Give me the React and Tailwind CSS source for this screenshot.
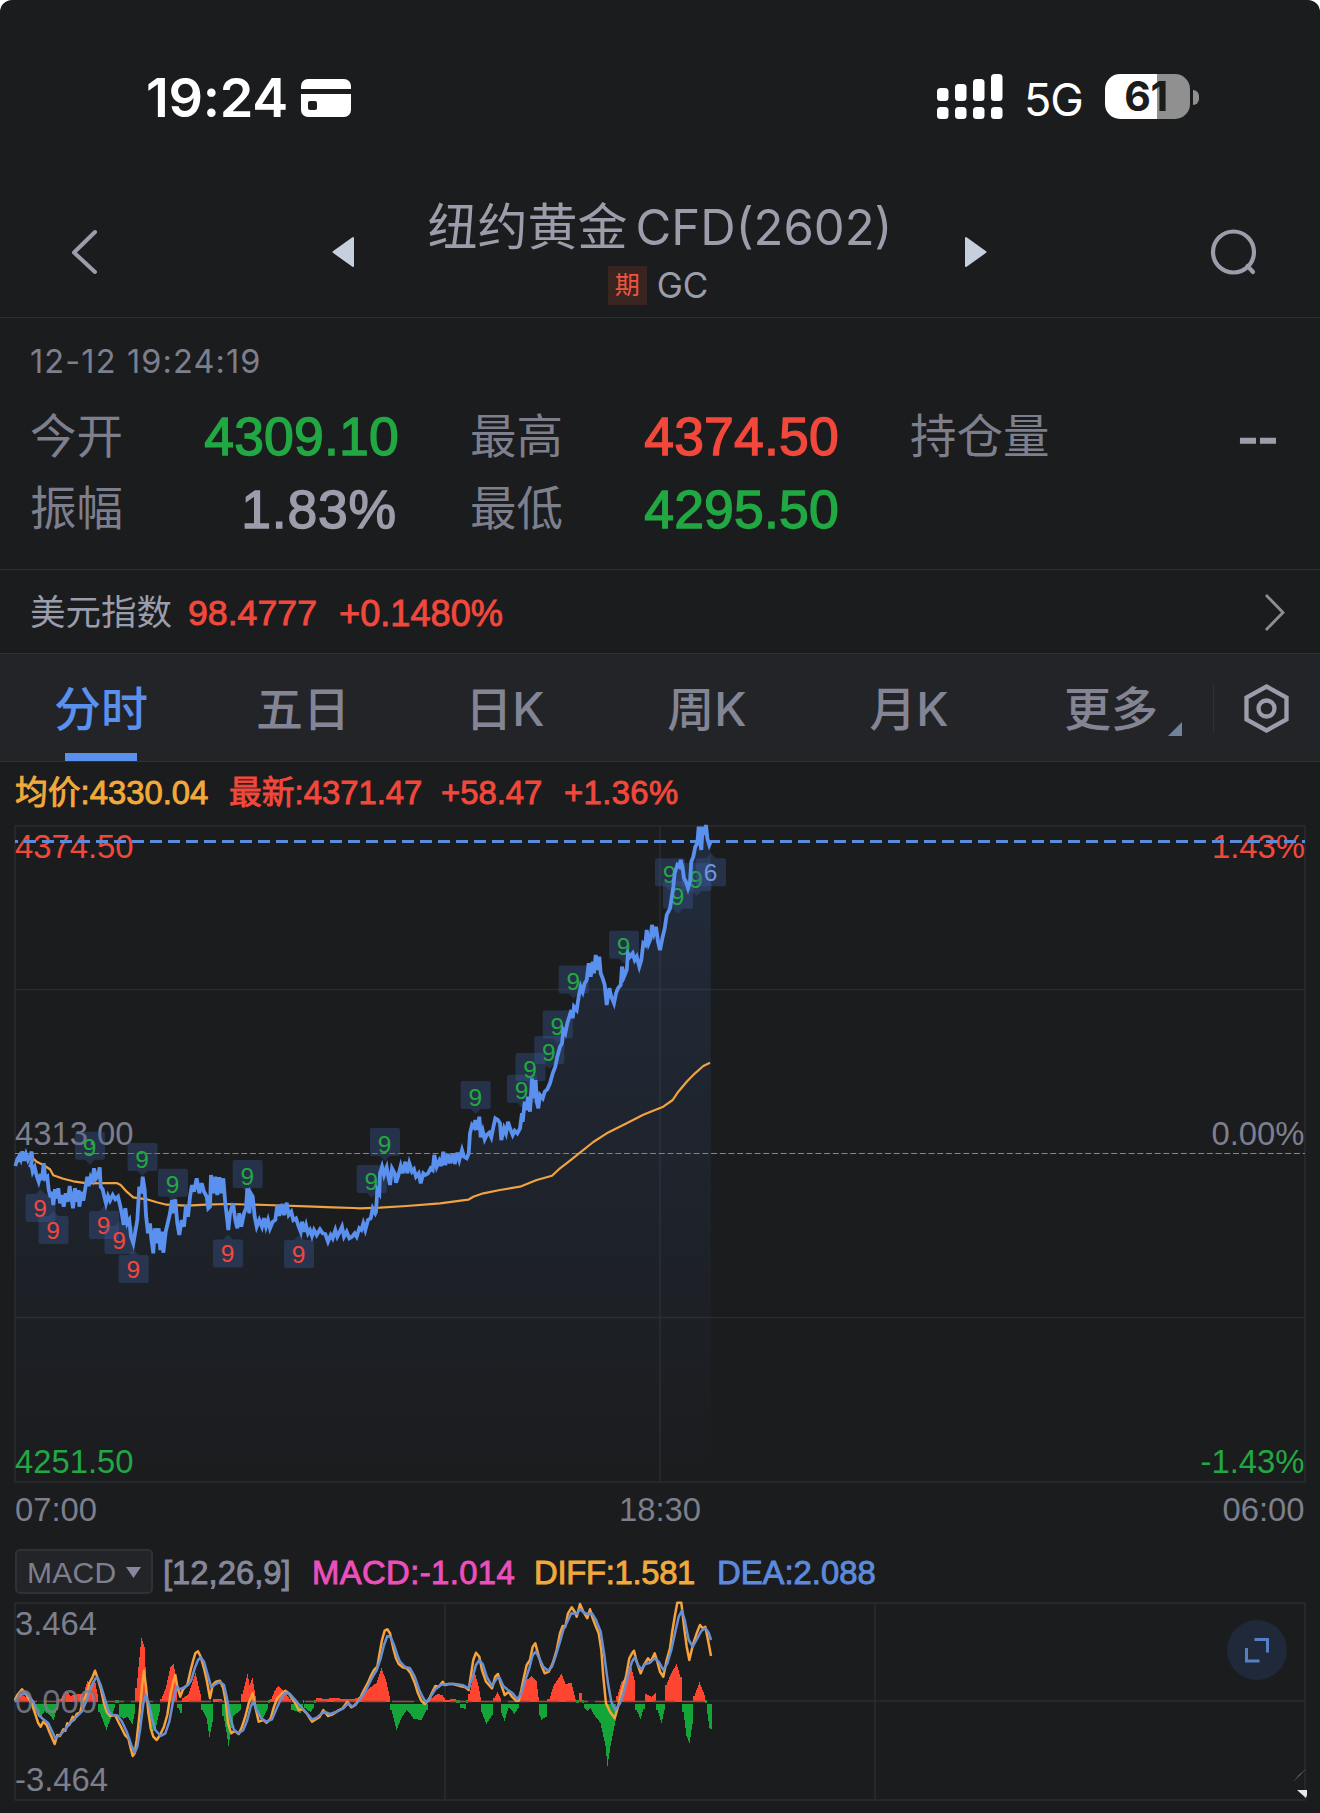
import React from 'react';

const UI = "font-['Inter','Noto_Sans_CJK_SC',sans-serif]";
const NUM = "font-['Liberation_Sans','Noto_Sans_CJK_SC',sans-serif]";
const MEDIUM = '[-webkit-text-stroke:0.9px_currentColor]';

const RED = '#f2483b';
const GREEN = '#21a843';

// points are kept in thirds of a pixel, relative to an origin
const trace = (ox, oy, text) =>
  text
    .trim()
    .split(/\s+/)
    .map((pair) => {
      const [x, y] = pair.split(',').map(Number);
      return `${(ox + x / 3).toFixed(1)},${(oy + y / 3).toFixed(1)}`;
    })
    .join(' ');

const priceLine = [
  trace(0, 1080, `46,258 52,238 58,228 62,238 67,214 72,242 78,222 84,240 90,228 95,215 97,240 90,262 94,252 98,275 104,262 110,288
    116,305 122,282 126,300 131,250 136,295 142,290 146,330 152,352 156,335 160,375 165,328 170,355 175,325 180,370 186,345 191,380
    197,340 203,365 209,318 214,352 219,385 225,325 230,365 236,330 238,380 245,335 250,362 256,325 262,290 266,318 272,290 278,300
    282,265 288,296 294,288 299,262 302,320 308,328 313,350 318,370 324,348 330,362 338,345 346,358 354,350 360,375 366,405 371,435
    376,385 382,430 388,420 393,470 400,490 406,455 412,420 418,320 424,340 428,290 434,330 438,405 444,460 450,430 454,475 460,520
    464,445 470,490 476,445 481,510 486,455 490,518 497,455 503,430 510,400 516,360 520,400 526,358 532,430 538,465 545,420 552,440
    558,375 564,410 570,350 576,315 582,335 590,295 598,340 605,310 612,335 620,350 625,385 630,380 633,285 640,340 646,290 652,345
    658,292 664,340 670,295 676,370 682,420 685,450 690,400 699,370 706,420 712,445 718,400 724,440 732,400 738,385 742,325 748,400
    752,340 758,350 764,410 770,440 778,420 786,440 792,415 798,440 804,420 810,445 818,425 826,420 832,375 838,408 845,372 852,405
    860,368 866,405 874,395 880,420 888,415 896,440 902,455 906,425 912,455 918,435 924,460 930,450 936,468 942,450 950,465 960,448
    968,460 976,462 984,485 992,465 998,475 1006,450 1012,470 1018,458 1026,440 1032,470 1040,455 1048,475 1056,470 1064,460
    1070,470 1078,445 1084,450 1090,430 1096,450 1104,420 1112,415 1118,385 1126,400`),
  trace(360, 1040, `48,515 52,450 58,460 60,400 66,380 72,405 80,382 86,415 90,435 96,385 104,400 108,428 114,410 122,378 128,400 136,365
    142,400 148,370 156,395 162,388 168,410 176,400 182,430 190,400 196,405 204,400 212,385 218,390 223,345 230,380 238,362 244,378
    250,335 256,375 264,342 270,370 278,342 284,372 292,338 298,360 306,330 312,350 320,355 326,340 330,280 336,255 342,262 346,240
    352,270 358,230 362,292 368,272 374,298 380,285 388,278 394,292 400,262 406,235 414,240 420,250 424,300 432,265 438,280 444,245
    450,265 458,285 464,272 472,280 480,265 486,220 488,245 494,185 500,210 504,170 510,215 516,115 520,175 527,120 530,185 535,205
    540,165 548,175 554,155 562,148 570,130 578,100 586,80 592,50 600,20`),
  trace(500, 810, `186,700 190,660 196,670 202,640 208,620 214,600 218,625 222,590 230,600 236,560 242,530 248,545 254,520 260,510
    266,460 272,500 278,455 282,490 287,435 292,480 298,440 302,490 308,505 314,525 320,585 328,535 334,560 342,580 348,550 354,535
    362,525 366,470 372,500 380,480 384,430 390,440 398,430 404,450 410,440 418,470 424,450 430,400 436,405 440,360 446,400 452,385
    456,345 462,370 468,350 474,395 480,420 488,380 494,355 500,315 510,295 514,270 520,230 524,190 532,165 538,170 542,150 548,175
    552,205 558,215 564,235 570,215 574,155 580,140 586,110 592,100 596,50 600,90 604,120 608,50 612,75 618,45 622,85 628,105 632,95`),
].join(' ');

const averageLine = [
  trace(0, 1080, `46,256 52,245 70,235 96,232 110,245 130,255 150,268 160,286 190,296 220,304 262,310 350,309 362,315 380,335 400,352
    440,358 470,367 500,374 560,377 620,374 680,372 800,375 920,379 1000,382 1060,384`),
  trace(360, 1040, `0,505 60,503 140,498 240,490 325,479 340,470 370,460 420,450 480,440 530,420 576,407 600,385 630,362 660,338
    700,306 740,280 800,250 850,224`),
  trace(500, 810, '465,900 490,890 518,870 535,845 560,815 585,790 610,768 630,758'),
].join(' ');

const diffLine = [
  trace(0, 1440, `44,780 52,765 66,748 80,765 95,790 105,820 115,850 122,860 130,845 140,855 150,880 164,912 172,885 180,888 190,868
    196,872 202,850 208,854 218,830 222,840 230,822 240,818 250,780 258,768 268,730 278,710 285,692 293,715 302,745 312,790 320,815
    330,828 345,825 355,845 365,865 375,885 385,895 392,925 398,948 404,940 410,900 418,830 426,740 432,692 438,740 445,815 452,865
    460,890 470,900 480,885 492,860 502,825 512,760 520,725 526,705 532,740 541,770 548,750 556,740 562,735 572,690 580,660 586,640
    594,634 602,650 612,685 620,720 630,775 638,735 648,725 660,722 670,745 678,790 684,850 694,880 704,872 716,882 726,860 736,830
    746,790 758,760 766,800 776,845 790,840 800,848 812,835 822,800 832,775 844,762 856,752 866,760 876,775 886,790 896,810 908,808
    920,820 936,845 948,838 958,832 970,810 984,828 1000,822 1014,812 1028,805 1042,785 1054,802 1066,795 1080,775 1092,750 1104,728
    1114,705 1122,690 1132,680 1138,645 1146,600 1154,572 1162,568 1170,580 1180,625 1188,655 1196,672`),
  trace(380, 1530, `60,405 68,412 80,415 92,430 104,458 114,490 124,512 134,522 146,510 156,488 166,468 176,470 188,455 194,465 206,462
    220,462 240,468 256,472 266,480 272,440 280,390 288,368 298,380 306,420 318,455 336,475 346,440 354,432 362,460 374,495 386,485
    396,500 408,512 416,512 424,480 432,440 440,405 450,390 458,350 466,340 474,370 484,405 494,430 506,425 518,400 530,360 540,310
    548,288 556,290 564,250 575,232 584,245 590,260 600,222 610,245 622,265 630,238 638,265 646,285 656,310 664,360 670,440 678,520
    690,545 704,565 714,530 726,480 738,440 748,385 756,370 762,362 770,395 782,430 792,405 804,385 812,395 824,370 832,395 840,425
    850,440 860,390 870,355 876,310 884,260 892,218 904,218 912,290 920,350 928,390 940,340 950,310 960,285 968,295 976,290 984,330
    993,378`),
].join(' ');

const deaLine = [
  trace(0, 1440, `44,785 60,765 80,760 100,785 116,825 130,838 145,850 166,895 180,885 196,868 210,850 230,830 245,815 258,785 272,745
    285,718 292,712 302,735 314,775 326,815 338,825 352,826 366,845 380,875 394,915 404,938 412,920 420,870 430,790 437,765 446,790
    456,835 466,870 482,888 496,880 508,845 520,780 530,740 540,748 552,742 564,735 574,720 584,685 594,660 602,652 612,665 622,700
    634,742 648,732 660,725 672,735 680,770 690,830 702,870 716,880 730,870 742,840 752,800 760,785 770,810 784,835 800,845 816,838
    830,805 844,775 856,758 870,762 884,778 898,795 914,812 936,838 952,832 972,815 990,822 1010,815 1030,805 1044,790 1058,800
    1074,785 1090,765 1104,738 1118,710 1130,690 1142,655 1152,615 1162,588 1172,592 1182,615 1192,645`),
  trace(380, 1530, `60,395 74,410 90,415 104,440 118,480 130,505 138,517 152,500 166,478 184,464 205,462 225,462 250,466 266,475
    278,440 288,405 298,390 308,402 320,440 336,468 350,445 358,442 370,468 384,480 398,490 412,508 424,490 436,450 448,415 458,375
    468,365 478,385 490,410 504,422 516,410 528,375 540,335 550,300 562,275 574,250 590,252 600,238 612,248 624,252 636,250 648,270
    662,305 672,370 684,460 694,515 706,540 720,520 732,485 744,435 756,395 764,382 774,405 784,418 796,402 810,398 824,385 836,395
    850,420 862,400 874,360 886,305 896,260 906,242 914,270 926,330 938,350 952,325 964,303 976,294 986,308 993,330`),
].join(' ');

// histogram profile: [x, height], above zero is red and below is green
const histogram = [
  [16, 2], [19, 7], [24, 6], [28, 3], [31, -2], [36, -9], [40, -14], [44, -7], [50, -12], [53, -16], [56, -6], [60, 3],
  [66, 11], [70, 6], [78, 8], [83, 8], [87, 21], [90, 17], [94, 24], [97, 8], [99, -8], [103, -18], [106, -26], [111, -12],
  [115, -2], [118, -3], [119, -12], [123, -15], [127, -13], [132, -20], [134, -10], [136, 14], [139, 45], [141, 64], [144, 55],
  [146, 14], [147, -10], [152, -28], [155, -25], [159, -8], [161, 3], [165, 13], [170, 35], [173, 38], [176, 22], [178, -4],
  [180, -9], [183, 4], [188, 8], [195, 29], [200, 8], [202, -6], [206, -14], [209, -33], [212, -18], [214, 3], [221, 3],
  [223, -12], [226, -28], [228, -42], [233, -12], [240, -6], [242, 8], [247, 28], [249, 17], [252, 24], [255, 6], [257, -6],
  [262, -15], [268, -3], [271, 3], [274, 11], [278, 16], [285, 9], [289, 3], [292, -6], [300, -9], [303, -3], [310, -8],
  [314, -3], [317, 4], [325, 3], [333, 4], [346, 3], [352, 3], [357, 4], [363, 8], [368, 13], [376, 19], [381, 34], [386, 20],
  [389, 6], [391, -6], [396, -26], [401, -14], [406, -6], [410, -10], [413, -15], [421, -16], [426, -6], [430, 3], [437, 8],
  [442, 7], [445, 2], [455, 3], [457, -3], [465, -5], [467, -2], [469, 8], [474, 30], [478, 16], [480, 5], [481, -8],
  [486, -20], [492, -11], [494, 4], [497, 10], [500, 4], [501, -9], [504, -17], [508, -4], [510, -5], [514, -10], [518, -4],
  [520, 8], [524, 20], [531, 26], [536, 21], [538, 5], [539, -11], [541, -16], [545, -13], [549, 3], [553, 16], [561, 28],
  [565, 18], [571, 19], [575, 3], [577, -2], [580, 9], [583, -3], [587, -7], [590, -4], [593, -10], [600, -19], [605, -42],
  [607, -62], [610, -42], [615, -17], [617, 6], [621, 20], [625, 24], [630, 38], [634, 22], [636, -6], [640, -15], [643, -5],
  [646, 8], [651, 5], [655, 9], [657, -6], [661, -19], [664, -6], [666, 17], [670, 27], [676, 38], [680, 25], [683, -8],
  [686, -32], [689, -39], [692, -20], [694, 6], [699, 20], [704, 7], [706, -3], [709, -24], [712, -26],
];

const bars = [];
for (let i = 0; i < histogram.length - 1; i += 1) {
  const [x0, h0] = histogram[i];
  const [x1, h1] = histogram[i + 1];
  for (let x = x0; x < x1; x += 1) {
    const t = (x - x0) / (x1 - x0);
    let h = Math.round(h0 + (h1 - h0) * t);
    // no slope through zero when the sign flips
    if (h0 * h1 < 0) h = t < 0.5 ? h0 : h1;
    if (h !== 0) bars.push({ x, h });
  }
}

const badges = [
  [40.5, 1208, RED], [53.5, 1230, RED], [104, 1225, RED], [119.5, 1240, RED], [133.7, 1269, RED], [228, 1253.5, RED],
  [299, 1254, RED], [90, 1145.7, GREEN], [142.5, 1157, GREEN], [173, 1182.7, GREEN], [247.7, 1174, GREEN],
  [371.7, 1179, GREEN], [385, 1142, GREEN], [475.7, 1095, GREEN], [522, 1088.7, GREEN], [530.5, 1067, GREEN],
  [549.3, 1050, GREEN], [557.7, 1024.5, GREEN], [573.7, 979.5, GREEN], [624, 944.7, GREEN], [670, 872.3, GREEN],
  [678, 894.7, GREEN], [696.5, 877, GREEN], [711, 872.3, '#6f97dd'],
];

const StatusBar = () => (
  <div className={`${UI} flex h-[170px] items-start justify-between pl-[146px] pr-[121px] pt-[65px] text-white`}>
    <div className="flex h-16 items-center pt-px">
      <span className="w-[155px] whitespace-nowrap text-[54px] font-semibold leading-none tracking-[-0.3px]">19:24</span>
      <svg width="50" height="38" viewBox="0 0 50 38">
        <path d="M7 0h36a7 7 0 0 1 7 7v3H0V7a7 7 0 0 1 7-7zM0 15h50v16a7 7 0 0 1-7 7H7a7 7 0 0 1-7-7z" fill="#fff" />
        <rect x="7" y="22" width="9" height="9" rx="2" fill="#1b1c1c" />
      </svg>
    </div>
    <div className="flex h-16 items-center">
      <svg width="66" height="46" viewBox="0 0 66 46" fill="#fff">
        <rect x="0" y="14" width="11.5" height="13" rx="3.5" />
        <rect x="18" y="10" width="11.5" height="17" rx="3.5" />
        <rect x="36" y="5" width="11.5" height="22" rx="3.5" />
        <rect x="54" y="0" width="11.5" height="27" rx="3.5" />
        <rect x="0" y="33" width="11.5" height="12" rx="3.5" />
        <rect x="18" y="33" width="11.5" height="12" rx="3.5" />
        <rect x="36" y="33" width="11.5" height="12" rx="3.5" />
        <rect x="54" y="33" width="11.5" height="12" rx="3.5" />
      </svg>
      <span className="ml-[21px] mt-1 w-[81px] whitespace-nowrap text-[45px] leading-none tracking-[-1px]">5G</span>
      <div className="mb-px flex h-[45px] w-[85px] items-center justify-center rounded-[15px] bg-[linear-gradient(to_right,#fff_61%,#909090_61%)]">
        <span className="pr-[3px] text-[41px] font-bold leading-none tracking-[-0.5px] text-[#1b1c1c]">61</span>
      </div>
      <div className="ml-[3px] h-[15px] w-[6px] rounded-r-full bg-[#909090]" />
    </div>
  </div>
);

const Header = () => (
  <div className={`${UI} flex h-[148px] items-start border-b border-[#2f3035] text-[#9b9dab]`}>
    <svg className="ml-[70px] mt-[58px]" width="30" height="48" fill="none" stroke="#9b9dab" strokeWidth="4" strokeLinecap="round" strokeLinejoin="round">
      <path d="M25 4L4 24.500L25 44" />
    </svg>
    <svg className="ml-[231px] mt-[65px]" width="24" height="34">
      <path d="M22 3v28L2.500 17z" fill="#c5cfde" stroke="#c5cfde" strokeWidth="2" strokeLinejoin="round" />
    </svg>
    <div className="flex w-[610px] flex-col items-center pt-[26px]">
      <div className="flex h-[62px] items-center whitespace-nowrap leading-none">
        <span className="text-[50px]">纽约黄金</span>
        <span className="ml-2 text-[49px]">CFD(2602)</span>
      </div>
      <div className="mr-[4px] mt-[8px] flex items-center gap-[10px]">
        <span className="flex size-[39px] items-center justify-center bg-[#3a2420] text-[25px] leading-none text-[#f0553f]">期</span>
        <span className="text-[35px] leading-none">GC</span>
      </div>
    </div>
    <svg className="-ml-px mt-[65px]" width="24" height="34">
      <path d="M2 3v28L21.500 17z" fill="#c5cfde" stroke="#c5cfde" strokeWidth="2" strokeLinejoin="round" />
    </svg>
    <svg className="ml-[221px] mt-[57px]" width="50" height="50" fill="none" stroke="#9b9dab" strokeWidth="4.200" strokeLinecap="round">
      <circle cx="24.500" cy="25" r="20.500" />
      <path d="M38.500 39l5.500 6" />
    </svg>
  </div>
);

const Quote = ({ label, value, color, box, size }) => (
  <div className={`flex items-center justify-between ${box}`}>
    <span className={`${UI} text-[46.500px] leading-none text-[#7d7f8d]`}>{label}</span>
    <span className={`${NUM} [-webkit-text-stroke:1.4px_currentColor] leading-none ${size} ${color}`}>{value}</span>
  </div>
);

const Quotes = () => (
  <div className="h-[252px] border-b border-[#2f3035] pl-[30px] pt-[26px]">
    <div className={`${UI} flex h-9 items-center text-[32.500px] tracking-[1.120px] text-[#7d7f8d]`}>12-12 19:24:19</div>
    <div className="mt-[20px] flex h-[72px] items-center">
      <Quote label="今开" value="4309.10" color="text-[#21a843]" box="w-[369px]" size="pt-px text-[53.500px] tracking-[0.200px]" />
      <Quote label="最高" value="4374.50" color="text-[#f2483b]" box="ml-[71px] w-[369px]" size="pt-px text-[53.500px] tracking-[0.200px]" />
      <Quote label="持仓量" value="--" color="text-[#9b9dab]" box="ml-[71px] w-[368px]" size="text-[60px]" />
    </div>
    <div className="flex h-[72px] items-center">
      <Quote label="振幅" value="1.83%" color="text-[#9b9dab]" box="w-[367px]" size="pt-[3px] text-[53.500px] tracking-[0.800px]" />
      <Quote label="最低" value="4295.50" color="text-[#21a843]" box="ml-[73px] w-[369px]" size="pt-[3px] text-[53.500px] tracking-[0.200px]" />
    </div>
  </div>
);

const IndexRow = () => (
  <div className="flex h-[83px] items-center pl-[30px] pr-[33px] pt-[3px]">
    <span className={`${UI} w-[158px] text-[35.500px] leading-none text-[#9b9dab]`}>美元指数</span>
    <span className={`${NUM} ${MEDIUM} w-[151px] pt-[2px] text-[35.700px] leading-none text-[#f2483b]`}>98.4777</span>
    <span className={`${NUM} ${MEDIUM} pt-[2px] text-[36.200px] leading-none text-[#f2483b]`}>+0.1480%</span>
    <svg className="ml-auto" width="24" height="40" fill="none" stroke="#8e8f94" strokeWidth="2.800">
      <path d="M3 2L20 19.500L3 37" />
    </svg>
  </div>
);

const tabs = ['分时', '五日', '日K', '周K', '月K', '更多'];

const Tabs = () => (
  <div className={`${UI} flex h-[109px] border-y border-[#2f3035] bg-[#232427] text-[47px] font-medium leading-none text-[#838594]`}>
    {tabs.map((tab, i) => (
      <div
        key={tab}
        className={`relative flex w-[202px] justify-center pt-[31px] ${i === 0 ? 'text-[#5a90ee]' : ''}`}
      >
        {tab}
        {i === 0 && <span className="absolute bottom-0 left-[65px] h-2 w-[72px] bg-[#5a90ee]" />}
        {i === 5 && <span className="absolute left-[158px] top-[68px] size-[14px] bg-[#72829a] [clip-path:polygon(100%_0,100%_100%,0_100%)]" />}
      </div>
    ))}
    <span className="ml-px mt-[31px] h-[48px] w-px bg-[#303136]" />
    <svg className="ml-[28px] mt-[28px]" width="50" height="54" fill="none" stroke="#9b9dab" strokeWidth="4.300">
      <path d="M24.500 4.500L44.500 15.500V37.500L24.500 48.500L4.500 37.500V15.500Z" />
      <circle cx="24.500" cy="26.500" r="8" />
    </svg>
  </div>
);

const Legend = () => (
  <div className={`${NUM} ${MEDIUM} flex h-[63px] items-center pl-[15px] text-[32.800px] leading-none text-[#f2483b]`}>
    <span className="w-[214px] whitespace-nowrap text-[#f2a93c]">均价:4330.04</span>
    <span className="w-[212px] whitespace-nowrap">最新:4371.47</span>
    <span className="w-[123px]">+58.47</span>
    <span className="tracking-[0.400px]">+1.36%</span>
  </div>
);

const PriceChart = () => (
  <svg className={`${NUM} block`} width="1320" height="708" viewBox="0 825 1320 708" overflow="visible" fontSize="32.800">
    <defs>
      <linearGradient id="area" gradientUnits="userSpaceOnUse" x1="0" y1="826" x2="0" y2="1482">
        <stop offset="0" stopColor="#3f69b0" stopOpacity="0.21" />
        <stop offset="0.5" stopColor="#3f69b0" stopOpacity="0.1" />
        <stop offset="1" stopColor="#3f69b0" stopOpacity="0" />
      </linearGradient>
    </defs>
    <g fill="none" stroke="#2a2b2f" strokeWidth="1.500">
      <rect x="15" y="826" width="1290" height="656" />
      <path d="M15 989.500H1305M15 1317.500H1305M660 826V1482" />
    </g>
    <path d="M15 1153.500H1305" stroke="#85868b" strokeWidth="1.200" strokeDasharray="6 2.700" />
    <g fill={RED}>
      <text x="15" y="858">4374.50</text>
      <text x="1305" y="858" textAnchor="end">1.43%</text>
    </g>
    <g fill="#7d7f8d">
      <text x="15" y="1145">4313.00</text>
      <text x="1304.500" y="1145" textAnchor="end">0.00%</text>
      <text x="15" y="1521">07:00</text>
      <text x="660" y="1521" textAnchor="middle">18:30</text>
      <text x="1304.500" y="1521" textAnchor="end">06:00</text>
    </g>
    <g fill={GREEN}>
      <text x="15" y="1473">4251.50</text>
      <text x="1304.500" y="1473" textAnchor="end">-1.43%</text>
    </g>
    <path d="M15 841.500H1305" stroke="#5c8bdc" strokeWidth="3" strokeDasharray="12 6" strokeDashoffset="9" />
    <polygon points={`15,1482 ${priceLine} 711,1482`} fill="url(#area)" />
    <polyline points={averageLine} fill="none" stroke="#f0a340" strokeWidth="2.200" strokeLinejoin="round" />
    {badges.map(([x, y, color]) => {
      const up = color !== GREEN;
      return (
        <g key={`${x}-${y}`}>
          <rect x={x - 15} y={y - 14} width="30" height="28" rx="2" fill="#3d5f9f" fillOpacity="0.34" />
          <path
            d={up ? `M${x - 5} ${y - 14}l5 -5l5 5z` : `M${x - 5} ${y + 14}l5 5l5 -5z`}
            fill="#3d5f9f"
            fillOpacity="0.3"
          />
          <text x={x - 0.5} y={up ? y + 8.5 : y + 10.5} fontSize="24.500" fill={color} textAnchor="middle">
            {color === '#6f97dd' ? '6' : '9'}
          </text>
        </g>
      );
    })}
    <polyline points={priceLine} fill="none" stroke="#5a90ee" strokeWidth="3.800" strokeLinejoin="miter" strokeMiterlimit="4" />
  </svg>
);

const MacdLegend = () => (
  <div className={`${NUM} flex h-[70px] items-start pl-[15px] pt-4 leading-none`}>
    <button className="flex h-[45px] w-[138px] items-center rounded-[5px] border-2 border-[#303136] bg-[#232428] pl-[10px] pt-[2px] text-[30px] leading-none tracking-[0.300px] text-[#7d7f8d]">
      MACD
      <svg className="ml-[9px]" width="15" height="11">
        <path d="M0 0h15L7.500 11z" fill="#85879a" />
      </svg>
    </button>
    <div className={`${MEDIUM} flex h-[45px] items-center whitespace-nowrap pt-[3px] text-[32.800px]`}>
      <span className="ml-[10px] w-[149px] text-[#85879a]">[12,26,9]</span>
      <span className="w-[222px] tracking-[0.400px] text-[#ec4fbd]">MACD:-1.014</span>
      <span className="w-[183px] tracking-[-0.300px] text-[#f2a93c]">DIFF:1.581</span>
      <span className="text-[#5b8add]">DEA:2.088</span>
    </div>
  </div>
);

const MacdChart = () => (
  <svg className={`${NUM} block`} width="1320" height="210" viewBox="0 1603 1320 210" overflow="visible" fontSize="32.800">
    <g fill="none" stroke="#2a2b2f" strokeWidth="1.500">
      <rect x="15" y="1603" width="1290" height="197" />
      <path d="M15 1701H1305M445 1603V1800M875 1603V1800" />
    </g>
    <g shapeRendering="crispEdges">
      {bars.map(({ x, h }) => (
        <rect key={x} x={x} y={h > 0 ? 1702 - h : h > -4 ? 1700 : 1704} width="1" height={h < 0 && h > -4 ? 3 : Math.abs(h)} fill={h > 0 ? '#ff452f' : '#13a538'} />
      ))}
    </g>
    <path d="M15 1701.500H708" stroke="#9c4a3c" strokeWidth="1.500" strokeDasharray="22 7" />
    <g fill="none" strokeWidth="2.500" strokeLinejoin="round">
      <polyline points={diffLine} stroke="#f7a23b" />
      <polyline points={deaLine} stroke="#6a8fd0" />
    </g>
    <g fill="#7d7f8d">
      <text x="15" y="1635">3.464</text>
      <text x="15" y="1713" fillOpacity="0.85">0.000</text>
      <text x="15" y="1791">-3.464</text>
    </g>
    <circle cx="1257" cy="1650" r="30" fill="#1f2939" />
    <path d="M1254.500 1639.500H1267.500V1652.500M1246.500 1648V1661H1259.500" fill="none" stroke="#5680c4" strokeWidth="3" />
    <path d="M1307 1768L1293 1782L1299 1775Z" fill="#8a8a8a" />
    <path d="M1297 1790h10v5l-1 3z" fill="#e8e8e8" />
  </svg>
);

export default function App() {
  return (
    <div className="h-[1813px] w-[1320px] overflow-hidden bg-white">
      <div className="flex h-full flex-col rounded-t-[12px] bg-[#1b1c1e]">
        <StatusBar />
        <Header />
        <Quotes />
        <IndexRow />
        <Tabs />
        <Legend />
        <PriceChart />
        <MacdLegend />
        <MacdChart />
      </div>
    </div>
  );
}
